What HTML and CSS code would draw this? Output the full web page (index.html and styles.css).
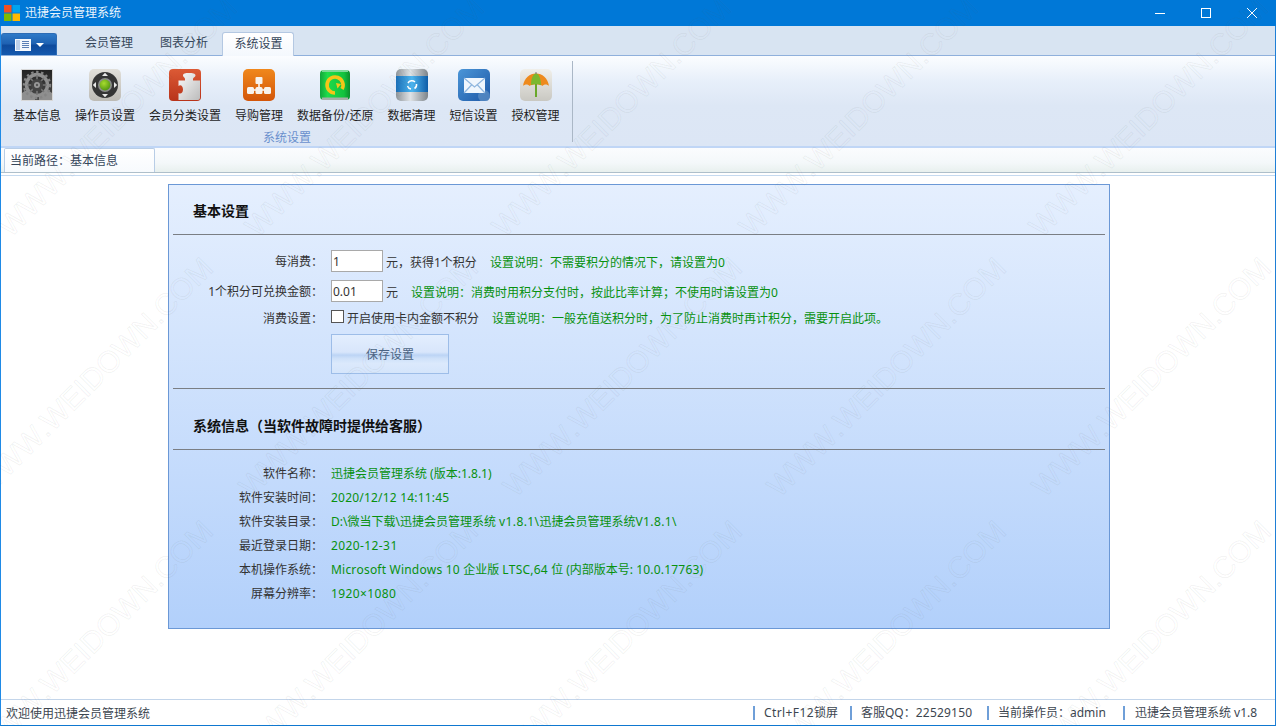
FILE: index.html
```html
<!DOCTYPE html>
<html lang="zh-CN">
<head>
<meta charset="utf-8">
<title>迅捷会员管理系统</title>
<link rel="stylesheet" href="styles.css">
</head>
<body>
<div class="window">
  <header class="titlebar">
    <svg class="logo" width="16" height="16" viewBox="0 0 16 16"><rect width="7.5" height="7.5" fill="#f25022"/><rect x="8.5" width="7.5" height="7.5" fill="#00a4ef"/><rect y="8.5" width="7.5" height="7.5" fill="#7fba00"/><rect x="8.5" y="8.5" width="7.5" height="7.5" fill="#ffb900"/></svg>
    <span class="title">迅捷会员管理系统</span>
    <div class="controls">
      <svg class="ctl" width="46" height="26" viewBox="0 0 46 26"><path d="M18 13.5h10" stroke="#fff" fill="none"/></svg>
      <svg class="ctl" width="46" height="26" viewBox="0 0 46 26"><rect x="18.5" y="8.5" width="9" height="9" stroke="#fff" fill="none"/></svg>
      <svg class="ctl" width="46" height="26" viewBox="0 0 46 26"><path d="M18 8l10 10M28 8l-10 10" stroke="#fff" fill="none"/></svg>
    </div>
  </header>

  <nav class="tabrow">
    <button class="appbtn">
      <svg width="16" height="12" viewBox="0 0 16 12"><rect width="16" height="12" fill="#f4f8fd"/><rect x="1" y="1" width="4" height="10" fill="#bcd0ea"/><path d="M7 2.5h7M7 4.5h7M7 6.5h7M7 8.5h7" stroke="#5a7fb5"/></svg>
      <svg width="8" height="4" viewBox="0 0 8 4"><path d="M0 0h8L4 4z" fill="#fff"/></svg>
    </button>
    <span class="tab tab-first">会员管理</span>
    <span class="tab">图表分析</span>
    <span class="tab tab-active">系统设置</span>
  </nav>

  <section class="ribbon">
    <div class="group">
      <div class="items">
        <div class="item">
          <svg class="icon" viewBox="0 0 32 32"><defs><linearGradient id="g1" x1="0" y1="0" x2="0" y2="1"><stop offset="0" stop-color="#232323"/><stop offset="1" stop-color="#4e4e4e"/></linearGradient></defs><rect width="32" height="32" fill="#d8d8d8"/><rect x="1" y="1" width="30" height="30" fill="url(#g1)"/><path d="M1 24Q8 18 14 27L14 31H1zM31 24Q24 18 18 27V31H31z" fill="#8f8f8f"/><circle cx="16" cy="16" r="10.5" fill="none" stroke="#8f8f8f" stroke-width="3.5"/><circle cx="16" cy="16" r="13" fill="none" stroke="#858585" stroke-width="2.4" stroke-dasharray="2.4 2.6"/><path d="M16 6v20M6 16h20M9 9l14 14M23 9L9 23" stroke="#777" stroke-width="1.6"/><circle cx="16" cy="16" r="6" fill="#454545"/><circle cx="16" cy="16" r="3" fill="#999"/><circle cx="16" cy="16" r="1.2" fill="#555"/></svg>
          <span>基本信息</span>
        </div>
        <div class="item">
          <svg class="icon" viewBox="0 0 32 32"><defs><linearGradient id="g2" x1="0" y1="0" x2="0" y2="1"><stop offset="0" stop-color="#e2e0da"/><stop offset="1" stop-color="#bdbbb5"/></linearGradient><radialGradient id="g2b" cx=".4" cy=".35" r=".7"><stop offset="0" stop-color="#a8dc30"/><stop offset="1" stop-color="#4f9410"/></radialGradient></defs><rect width="32" height="32" rx="5" fill="url(#g2)"/><circle cx="16" cy="16" r="13" fill="#353535"/><circle cx="16" cy="16" r="7" fill="#8c8c8c"/><circle cx="16" cy="16" r="5.4" fill="url(#g2b)"/><path d="M16 3.8l3 3.2h-6zM16 28.2l3-3.2h-6zM3.8 16l3.2-3v6zM28.2 16l-3.2-3v6z" fill="#e8e8e8"/></svg>
          <span>操作员设置</span>
        </div>
        <div class="item">
          <svg class="icon" viewBox="0 0 32 32"><defs><linearGradient id="g3" x1="0" y1="0" x2="0" y2="1"><stop offset="0" stop-color="#dc5a35"/><stop offset="1" stop-color="#b8331a"/></linearGradient><linearGradient id="g3b" x1="0" y1="0" x2="1" y2="1"><stop offset="0" stop-color="#fafafa"/><stop offset="1" stop-color="#bcbcbc"/></linearGradient></defs><rect width="32" height="32" rx="4" fill="url(#g3)"/><path d="M14 6.500c0-2 2.500-2.500 6-2.500s6.500.5 6.500 2.500c0 1.500-2.500 2-2.500 3.500v1.500H31V29a2 2 0 0 1-2 2H9.500v-7c2 1.500 4.500 0 4.500-3.500S11.500 15 9.500 17v-5.500H16V10c0-1.500-2-2-2-3.500z" fill="url(#g3b)"/></svg>
          <span>会员分类设置</span>
        </div>
        <div class="item">
          <svg class="icon" viewBox="0 0 32 32"><defs><linearGradient id="g4" x1="0" y1="0" x2="0" y2="1"><stop offset="0" stop-color="#f0881c"/><stop offset="1" stop-color="#d3560a"/></linearGradient></defs><rect width="32" height="32" rx="5" fill="url(#g4)"/><path d="M16 12v7M9 21h14" stroke="#fff" stroke-width="1.5"/><g fill="#f7f3ee"><rect x="12.500" y="8" width="7" height="7" rx="1"/><rect x="4" y="18" width="7" height="7" rx="1.500"/><rect x="12.500" y="18" width="7" height="7" rx="1.500"/><rect x="21" y="18" width="7" height="7" rx="1.500"/></g></svg>
          <span>导购管理</span>
        </div>
        <div class="item">
          <svg class="icon" viewBox="0 0 32 32"><defs><linearGradient id="g5" x1="0" y1="0" x2="1" y2="0"><stop offset="0" stop-color="#12a53a"/><stop offset=".25" stop-color="#1fdc4a"/><stop offset=".8" stop-color="#12c23e"/><stop offset="1" stop-color="#0b8d2c"/></linearGradient></defs><rect x="1" y="1" width="30" height="30" rx="4" fill="url(#g5)"/><rect x="3" y="1" width="26" height="2" fill="#7fd99a"/><rect x="3" y="28.500" width="26" height="2.500" fill="#a5b0a8"/><path d="M23 20A8 8 0 1 0 16 24" fill="none" stroke="#f5c518" stroke-width="3.600"/><path d="M17 14l5 1-3.500 4.500z" fill="#f5c518"/></svg>
          <span>数据备份/还原</span>
        </div>
        <div class="item">
          <svg class="icon" viewBox="0 0 32 32"><defs><linearGradient id="g6" x1="0" y1="0" x2="1" y2="0"><stop offset="0" stop-color="#1a6fb8"/><stop offset=".5" stop-color="#4cb4ee"/><stop offset="1" stop-color="#0f5da8"/></linearGradient><linearGradient id="g6b" x1="0" y1="0" x2="1" y2="0"><stop offset="0" stop-color="#8d949a"/><stop offset=".45" stop-color="#dfe3e6"/><stop offset="1" stop-color="#7d848a"/></linearGradient></defs><rect x="0" y="0" width="32" height="32" rx="5" fill="url(#g6b)"/><rect x="0" y="7" width="32" height="16" fill="url(#g6)"/><path d="M12 14a4.500 4.500 0 0 1 7 -1M20.500 15a4.500 4.500 0 0 1-2 4.500M15 20a4.500 4.500 0 0 1-3.500-3" fill="none" stroke="#fff" stroke-width="1.500"/></svg>
          <span>数据清理</span>
        </div>
        <div class="item">
          <svg class="icon" viewBox="0 0 32 32"><defs><linearGradient id="g7" x1="0" y1="0" x2="1" y2="1"><stop offset="0" stop-color="#4b96d8"/><stop offset="1" stop-color="#1e58a6"/></linearGradient></defs><rect width="32" height="32" rx="5" fill="url(#g7)"/><circle cx="26" cy="27" r="6" fill="#5f92c6" opacity=".7"/><path d="M6 9h21v15H6z" fill="#f0f6fd"/><path d="M6 9l10.500 9L27 9M6 24l7.500-8M27 24l-7.500-8" fill="none" stroke="#8fb6de" stroke-width="1.200"/></svg>
          <span>短信设置</span>
        </div>
        <div class="item">
          <svg class="icon" viewBox="0 0 32 32"><defs><linearGradient id="g8" x1="0" y1="0" x2="0" y2="1"><stop offset="0" stop-color="#f0efea"/><stop offset="1" stop-color="#c9c8c2"/></linearGradient></defs><rect width="32" height="32" rx="5" fill="url(#g8)"/><path d="M3 17C4 9 10 4.500 16 4.500S28 9 29 17c-2-2-5-2-6.500 0-2-2-11-2-13 0C8 15 5 15 3 17z" fill="#ee8a1c"/><path d="M11 16C11 9 13.500 4.500 16 4.500S21 9 21 16c-1.500-1-8.500-1-10 0z" fill="#7cb82e"/><path d="M16 15v13" stroke="#6aa82a" stroke-width="2"/><path d="M16 3v2" stroke="#7a7a7a"/></svg>
          <span>授权管理</span>
        </div>
      </div>
      <div class="grouplabel">系统设置</div>
    </div>
    <div class="sep"></div>
  </section>

  <div class="crumbbar">
    <div class="crumb">当前路径：基本信息</div>
  </div>

  <main class="main">
    <div class="panel">
      <h2 class="heading">基本设置</h2>
      <div class="form">
        <label class="lbl">每消费：</label>
        <div class="val"><input class="num" type="text" value="1"><span class="after">元，获得1个积分</span><span class="note">设置说明：不需要积分的情况下，请设置为0</span></div>
        <label class="lbl">1个积分可兑换金额：</label>
        <div class="val"><input class="num" type="text" value="0.01"><span class="after">元</span><span class="note">设置说明：消费时用积分支付时，按此比率计算；不使用时请设置为0</span></div>
        <label class="lbl lbl-short">消费设置：</label>
        <div class="val val-short"><span class="check"></span><span class="checktext">开启使用卡内金额不积分</span><span class="note">设置说明：一般充值送积分时，为了防止消费时再计积分，需要开启此项。</span></div>
        <div class="spacer"></div>
        <div class="val"><button class="save">保存设置</button></div>
      </div>
      <h2 class="heading heading-2">系统信息（当软件故障时提供给客服）</h2>
      <div class="info">
        <span class="k">软件名称：</span><span class="v">迅捷会员管理系统 (版本:1.8.1)</span>
        <span class="k">软件安装时间：</span><span class="v lat">2020/12/12 14:11:45</span>
        <span class="k">软件安装目录：</span><span class="v">D:\微当下载\迅捷会员管理系统 <span class="lat-wide">v1.8.1\</span>迅捷会员管理系统<span class="lat-wide">V1.8.1\</span></span>
        <span class="k">最近登录日期：</span><span class="v lat-wide">2020-12-31</span>
        <span class="k">本机操作系统：</span><span class="v"><span class="lat">Microsoft Windows 10 </span>企业版 <span class="lat">LTSC,64 </span>位 (内部版本号: <span class="lat">10.0.17763)</span></span>
        <span class="k">屏幕分辨率：</span><span class="v lat-wide">1920×1080</span>
      </div>
    </div>
  </main>

  <footer class="status">
    <span class="welcome">欢迎使用迅捷会员管理系统</span>
    <span class="cell cell-lock"><span class="lat-wide">Ctrl+F12</span>锁屏</span>
    <span class="cell cell-qq">客服QQ：<span class="lat">22529150</span></span>
    <span class="cell cell-op">当前操作员：admin</span>
    <span class="cell cell-ver">迅捷会员管理系统 v1.8</span>
  </footer>
</div>

<svg class="watermark" width="1276" height="726" viewBox="0 0 1276 726" aria-hidden="true">
  <defs>
    <text id="wm" class="wmtext" text-anchor="end" transform="rotate(-45)">WWW.WEIDOWN.COM</text>
  </defs>
  <use href="#wm" transform="translate(239 10)"/>
  <use href="#wm" transform="translate(486 10)"/>
  <use href="#wm" transform="translate(733 10)"/>
  <use href="#wm" transform="translate(980 10)"/>
  <use href="#wm" transform="translate(1270 10)"/>
  <use href="#wm" transform="translate(215 270)"/>
  <use href="#wm" transform="translate(480 270)"/>
  <use href="#wm" transform="translate(744 270)"/>
  <use href="#wm" transform="translate(1008 270)"/>
  <use href="#wm" transform="translate(1273 270)"/>
  <use href="#wm" transform="translate(215 533)"/>
  <use href="#wm" transform="translate(480 533)"/>
  <use href="#wm" transform="translate(744 533)"/>
  <use href="#wm" transform="translate(1008 533)"/>
  <use href="#wm" transform="translate(1273 533)"/>
</svg>
</body>
</html>
```
FILE: styles.css
```css
* { box-sizing: border-box; }
html, body { margin: 0; padding: 0; height: 100%; overflow: hidden; }
body {
  font-family: "Noto Sans", "Noto Sans CJK SC", sans-serif;
  font-size: 12px;
  color: #222;
  background: #fff;
  text-spacing-trim: space-all;
  font-kerning: none;
  font-feature-settings: "chws" 0, "palt" 0, "halt" 0;
}
.lat { letter-spacing: .2px; }
.lat-wide { letter-spacing: .4px; }
.window {
  display: flex;
  flex-direction: column;
  height: 726px;
  border-left: 1px solid #1f8ae6;
  border-right: 1px solid #1f7fd6;
  border-bottom: 1px solid #0f78d0;
}
.titlebar {
  display: flex;
  align-items: center;
  flex: 0 0 26px;
  margin: 0 -1px;
  padding-left: 4px;
  background: #0078d7;
  color: #fff;
}
.title { margin-left: 5px; line-height: 26px; color: #eaf4fc; }
.controls { margin-left: auto; display: flex; padding-right: 1px; }
.ctl { display: block; }
.tabrow {
  display: flex;
  align-items: flex-end;
  flex: 0 0 30px;
  background: #d8e4f2;
  border-bottom: 1px solid #8fb0dc;
  color: #35465a;
}
.appbtn {
  width: 56px;
  height: 22px;
  padding: 0 0 0 1px;
  display: flex;
  align-items: center;
  justify-content: center;
  gap: 5px;
  border: 1px solid #2d6cb5;
  border-bottom: 0;
  border-radius: 3px 3px 0 0;
  background: linear-gradient(#2e7ac8 0%, #1f62b3 45%, #0e4a9c 55%, #1459ae 100%);
}
.tab { width: 72px; height: 23px; line-height: 22px; text-align: center; margin-right: 3px; }
.tab-first { margin-left: 16px; }
.tab-active {
  margin-left: -1px;
  padding-left: 1px;
  background: linear-gradient(#fff, #f4f8fd);
  border: 1px solid #b4c8e2;
  border-bottom: 0;
  border-radius: 3px 3px 0 0;
  margin-bottom: -1px;
  height: 24px;
}
.ribbon {
  display: flex;
  flex: 0 0 92px;
  padding: 5px 0 0 5px;
  background: linear-gradient(#fbfdff 0%, #e7effa 28%, #dde7f5 55%, #dce6f5 100%);
  border-bottom: 2px solid #c0d6f6;
}
.group { display: flex; flex-direction: column; width: 562px; }
.items { display: flex; }
.item {
  display: flex;
  flex-direction: column;
  align-items: center;
  padding: 8px 7px 0;
  color: #1e1e1e;
}
.item span { line-height: 16px; margin-top: 7px; white-space: nowrap; }
.icon { width: 32px; height: 32px; display: block; }
.grouplabel { text-align: center; color: #6a90cd; line-height: 16px; margin-top: 6px; }
.sep { width: 1px; height: 81px; background: #aab7c6; margin-left: 4px; }
.crumbbar {
  flex: 0 0 24px;
  padding-left: 3px;
  background: linear-gradient(#fbfcfe 0%, #f4f8fa 60%, #e8f0ee 100%);
  border-bottom: 1px solid #aebfca;
  display: flex;
}
.crumb {
  width: 151px;
  height: 24px;
  padding-left: 5px;
  line-height: 24px;
  color: #35465a;
  background: linear-gradient(#fff, #f7fafd);
  border: 1px solid #b8cde6;
  border-bottom: 0;
  border-radius: 2px 2px 0 0;
}
.main {
  flex: 1;
  min-height: 0;
  background: #fff;
  border-top: 1px solid #fff;
  padding-top: 10px;
  position: relative;
}
.main::before { content: ""; position: absolute; left: 0; right: 0; top: 1px; height: 1px; background: #c5daf0; }
.panel {
  width: 942px;
  height: 445px;
  margin: 0 0 0 167px;
  padding: 0 4px;
  border: 1px solid #6b98d6;
  background: linear-gradient(#e5effe 0%, #b2d0fb 100%);
}
.heading {
  margin: 0;
  height: 50px;
  padding: 0 0 0 20px;
  line-height: 52px;
  font-size: 14px;
  font-weight: 700;
  color: #111;
  border-bottom: 1px solid #7a7e84;
}
.heading-2 { height: 62px; line-height: 74px; border-top: 1px solid #7a7e84; }
.form {
  display: grid;
  grid-template-columns: 150px 1fr;
  column-gap: 8px;
  row-gap: 8px;
  padding: 15px 0 14px;
}
.lbl { text-align: right; height: 22px; line-height: 24px; color: #333; }
.lbl-short { height: 14px; line-height: 14px; margin-top: 2px; }
.val { display: flex; align-items: center; color: #333; }
.val-short { height: 16px; }
.num {
  width: 52px;
  height: 22px;
  padding: 0 1px;
  border: 1px solid #a9a9a9;
  background: #fff;
  font: inherit;
  color: #333;
  outline: none;
}
.after { margin-left: 3px; padding-top: 2px; }
.note { margin-left: 13px; padding-top: 2px; color: #08910f; }
.val-short .note { padding-top: 0; }
.check {
  width: 13px;
  height: 13px;
  border: 1px solid #555;
  background: #fff;
  align-self: flex-start;
}
.checktext { margin-left: 3px; }
.save {
  width: 118px;
  height: 40px;
  padding: 0;
  border: 1px solid #9dbde8;
  background: linear-gradient(#e3eefe 0%, #d8e6fb 45%, #bcd4f5 53%, #cfe1f9 62%, #dbe9fc 75%, #d5e5fb 100%);
  font: inherit;
  color: #4b6484;
}
.info {
  display: grid;
  grid-template-columns: 150px 1fr;
  column-gap: 8px;
  grid-auto-rows: 24px;
  padding-top: 12px;
  line-height: 24px;
}
.k { text-align: right; color: #333; }
.v { color: #08910f; }
.status {
  display: flex;
  align-items: center;
  flex: 0 0 26px;
  border-top: 1px solid #c3d5ea;
  padding-left: 5px;
  color: #3c4650;
  background: #fff;
}
.welcome { margin-right: auto; }
.cell { border-left: 2px solid #6f9fd8; line-height: 14px; padding-left: 9px; white-space: nowrap; }
.cell-lock { width: 97px; }
.cell-qq { width: 137px; }
.cell-op { width: 136px; }
.cell-ver { width: 152px; padding-left: 10px; }
.watermark { position: absolute; left: 0; top: 0; pointer-events: none; }
.wmtext {
  font-family: "Liberation Sans", sans-serif;
  font-size: 30px;
  fill: none;
  stroke: rgba(90, 90, 90, 0.07);
  stroke-width: 1;
}
```
